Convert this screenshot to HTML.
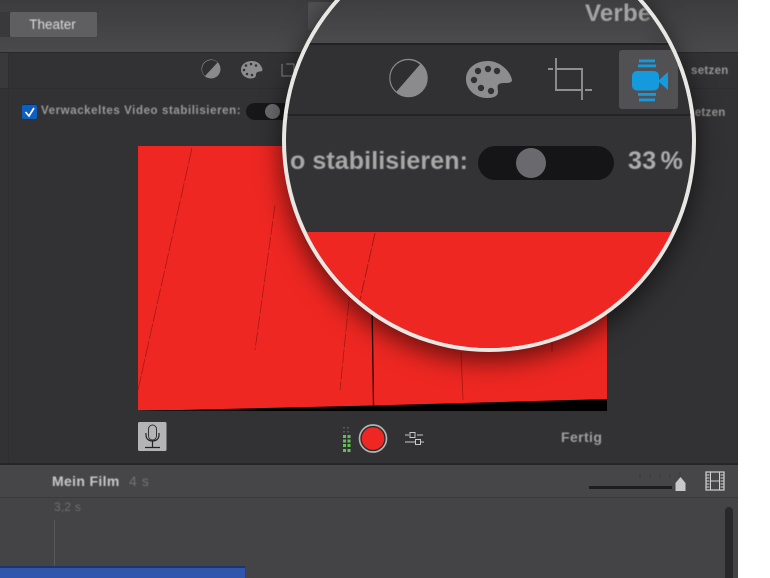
<!DOCTYPE html>
<html lang="de"><head><meta charset="utf-8"><title>iMovie</title>
<style>
html,body{margin:0;padding:0;background:#fff}
#p{position:relative;width:770px;height:578px;overflow:hidden;background:#fff;font-family:"Liberation Sans",sans-serif}
#p div,#p span{position:absolute;white-space:nowrap}
#p svg{position:absolute;left:0;top:0}
.b{filter:blur(.45px)}
</style></head><body>
<div id="p">
<div id="app" style="left:0;top:0;width:738px;height:578px;background:#323234;overflow:hidden">
  <div style="left:0;top:0;width:738px;height:52px;background:linear-gradient(#3c3c3e,#4a4a4c)"></div>
  <div style="left:0;top:52px;width:738px;height:1px;background:#29292b"></div>
  <div style="left:0;top:12px;width:10px;height:25px;background:#39393b"></div>
  <div style="left:10px;top:12px;width:87px;height:25px;background:#5f5f62;border-radius:2px"></div>
  <div class="b" style="left:9px;top:12px;width:87px;height:25px;line-height:25px;text-align:center;color:#dcdcdc;font-size:13.500px">Theater</div>
  <div style="left:308px;top:2px;width:30px;height:28px;background:#505053;border-radius:2px"></div>
  <div style="left:0;top:53px;width:8px;height:35px;background:#39393b"></div>
  <div style="left:8px;top:53px;width:1px;height:410px;background:#2e2e30"></div>
  <div style="left:0;top:88px;width:738px;height:1px;background:#2e2e30"></div>
  <div class="b" style="left:691px;top:65px;font-size:11.500px;font-weight:bold;letter-spacing:.3px;color:#979797">setzen</div>
  <div class="b" style="left:688px;top:107px;font-size:11.500px;font-weight:bold;letter-spacing:.3px;color:#979797">setzen</div>
  <div style="left:22px;top:104px;width:15px;height:15px;background:#0e5fc0;border-radius:2px;box-shadow:inset 0 1px 0 #0a2f66"></div>
  <svg width="738" height="578" viewBox="0 0 738 578">
    <path d="M25.500 112l3.500 4 5-8" fill="none" stroke="#fff" stroke-width="1.700"/>
    <circle cx="211" cy="69" r="9.500" fill="#8a8a8c"/>
    <path d="M205 76A9 9 0 0 1 217.500 62.500Z" fill="#2f2f31"/>
    <path d="M252 61c-6 0-11 3.500-11 8.500 0 5.500 5 9 10 9 4 0 5-2 5-4s2-3 4-3c2.500 0 3-1.500 2-3.500-1.500-4-5-7-10-7z" fill="#8d8d8f"/>
    <g fill="#333"><circle cx="246" cy="65.500" r="1.300"/><circle cx="251" cy="64" r="1.300"/><circle cx="256" cy="65.500" r="1.300"/><circle cx="244" cy="70" r="1.300"/><circle cx="247" cy="74" r="1.300"/><circle cx="252" cy="75" r="1.300"/></g>
    <path d="M282 64v12h12M286 64h8v12" fill="none" stroke="#888" stroke-width="1"/>
  </svg>
  <div class="b" style="left:41px;top:105px;font-size:11.500px;font-weight:bold;letter-spacing:.59px;color:#9a9a9a">Verwackeltes Video stabilisieren:</div>
  <div style="left:246px;top:103px;width:60px;height:17px;background:#17171a;border-radius:9px"></div>
  <div style="left:265px;top:104px;width:15px;height:15px;background:#6b6b6f;border-radius:50%"></div>

  <svg width="738" height="578" viewBox="0 0 738 578">
    <rect x="138" y="146" width="469" height="264" fill="#ee2722"/>
    <path d="M138 411L373 405.500L607 399V411Z" fill="#000"/>
    <g fill="none" stroke="#a31a16" stroke-width=".8">
      <path d="M192 148L138 390" stroke-dasharray="16 2"/>
      <path d="M275 205L255 350" stroke-dasharray="14 2"/>
      <path d="M352 270L340 390" stroke-dasharray="14 2"/>
      <path d="M461 352L463 400"/>
      <path d="M552 340V352"/>
    </g>
    <path d="M372 300L373.500 406" stroke="#2a0605" stroke-width="1.300" fill="none"/>
    <rect x="138" y="422" width="28.500" height="29" rx="1.500" fill="#b4b4b6"/>
    <rect x="148.500" y="425" width="8" height="15" rx="4" fill="none" stroke="#333" stroke-width="1"/>
    <path d="M146 433v2c0 4 3 6 6.500 6s6.500-2 6.500-6v-2M152.500 441v6M145 447.500h15" fill="none" stroke="#222" stroke-width="1.200"/>
    <g fill="#5fc24f">
      <rect x="343" y="435" width="3" height="3"/><rect x="347.500" y="435" width="3" height="3"/>
      <rect x="343" y="439.500" width="3" height="3"/><rect x="347.500" y="439.500" width="3" height="3"/>
      <rect x="343" y="444" width="3" height="3"/><rect x="347.500" y="444" width="3" height="3"/>
      <rect x="343" y="449" width="3" height="3"/><rect x="347.500" y="449" width="3" height="3"/>
    </g>
    <g fill="#5a5a5c"><rect x="343" y="427" width="2" height="1.500"/><rect x="347" y="427" width="2" height="1.500"/><rect x="343" y="431" width="2" height="1.500"/><rect x="347" y="431" width="2" height="1.500"/></g>
    <circle cx="373" cy="438.500" r="13.500" fill="#2b2b2d" stroke="#b4b4b4" stroke-width="1.700"/>
    <circle cx="373" cy="438.500" r="11.300" fill="#ee2722"/>
    <path d="M405 435h4M417 435h6M405 442h10M421 442h3" stroke="#c8c8c8" stroke-width="1.100" fill="none"/>
    <rect x="410" y="432.500" width="5" height="5" fill="none" stroke="#c8c8c8"/>
    <rect x="415.500" y="439.500" width="5" height="5" fill="none" stroke="#c8c8c8"/>
  </svg>
  <div class="b" style="left:561px;top:429px;font-size:14px;font-weight:bold;letter-spacing:.4px;color:#a0a0a0">Fertig</div>

  <div style="left:0;top:463px;width:738px;height:2px;background:#262628"></div>
  <div style="left:0;top:465px;width:738px;height:32px;background:#464648"></div>
  <div style="left:0;top:497px;width:738px;height:1px;background:#3a3a3c"></div>
  <div style="left:0;top:498px;width:738px;height:80px;background:#444446"></div>
  <div class="b" style="left:52px;top:473px;font-size:14px;font-weight:bold;letter-spacing:.35px;color:#c8c8c8">Mein Film</div>
  <div class="b" style="left:129px;top:473px;font-size:14px;letter-spacing:.6px;color:#737375">4 s</div>
  <div class="b" style="left:54px;top:500px;font-size:12px;letter-spacing:.2px;color:#6f6f71">3,2 s</div>
  <div style="left:54px;top:520px;width:1px;height:46px;background:#59595b"></div>
  <div style="left:0;top:566px;width:245px;height:2px;background:#1f3566"></div>
  <div style="left:0;top:568px;width:245px;height:10px;background:#2f55ac"></div>
  <div style="left:725px;top:507px;width:8px;height:71px;background:#29292b;border-radius:4px 4px 0 0"></div>
  <svg width="738" height="578" viewBox="0 0 738 578">
    <path d="M589 487.500H672" stroke="#1d1d1f" stroke-width="3" fill="none"/>
    <path d="M640 474v4M650 474v4M660 474v4M670 474v4M680 472v6" stroke="#3a3a3c" stroke-width="1" fill="none"/>
    <path d="M675.500 491v-8l5-6 5 6v8z" fill="#c8c8ca"/>
    <rect x="706" y="472" width="18" height="18" fill="none" stroke="#d0d0d0" stroke-width="1.200"/>
    <path d="M710.500 472v18M719.500 472v18M710.500 481h9" stroke="#d0d0d0" stroke-width="1" fill="none"/>
    <path d="M706.500 475h3M706.500 478h3M706.500 481h3M706.500 484h3M706.500 487h3M720.500 475h3M720.500 478h3M720.500 481h3M720.500 484h3M720.500 487h3" stroke="#d0d0d0" stroke-width="1" fill="none"/>
  </svg>
</div>

<div style="left:282px;top:-70px;width:406px;height:414px;border:4px solid #e9e7e4;border-radius:50%;overflow:hidden;box-shadow:0 8px 26px rgba(0,0,0,.6);background:#333335">
  <div style="left:-286px;top:66px;width:770px;height:578px">
    <div style="left:0;top:0;width:770px;height:43px;background:linear-gradient(#3e3e40,#4b4b4d)"></div>
    <div style="left:0;top:43px;width:770px;height:2px;background:#222224"></div>
    <div style="left:0;top:45px;width:770px;height:70px;background:#313133"></div>
    <div style="left:0;top:114px;width:770px;height:2px;background:#232325"></div>
    <div class="b" style="left:585px;top:0;font-size:24px;font-weight:bold;letter-spacing:.2px;color:#a4a4a4">Verbes</div>
    <div style="left:640px;top:0;width:30px;height:42px;background:linear-gradient(90deg,rgba(67,67,69,0),#434345 70%)"></div>
    <div style="left:619px;top:50px;width:59px;height:59px;background:#515154;border-radius:3px"></div>
    <svg width="770" height="578" viewBox="0 0 770 578">
      <circle cx="408.500" cy="78" r="18.500" fill="#8b8b8d" stroke="#8b8b8d" stroke-width="1.500"/>
      <path d="M396.500 91.500A17 17 0 0 1 420 64.500Z" fill="#2f2f31"/>
      <path d="M488 61c-13 0-22 8-22 18 0 11 10 19 21 19 7 0 11-2 11-6 0-3-1-5 0-7 1-2 5-2 8-2 4 0 6-1 6-3-2-10-13-19-24-19z" fill="#8d8d8f"/>
      <g fill="#323234">
        <circle cx="478" cy="71" r="3.200"/><circle cx="488" cy="69" r="3.200"/><circle cx="497" cy="71" r="3.200"/>
        <circle cx="474" cy="80" r="3.200"/><circle cx="481" cy="88" r="3.200"/><circle cx="491" cy="91" r="3.200"/>
      </g>
      <path d="M556 58V90H582M556 69H582V100M548 69H553M585 90H592" fill="none" stroke="#8f8f91" stroke-width="1.900"/>
      <g fill="#169ade">
        <rect x="632" y="71" width="27" height="19.500" rx="5"/>
        <path d="M658 81l10-9v18z"/>
        <rect x="639" y="59.500" width="16" height="2.800"/><rect x="638" y="64.500" width="18" height="2.800"/>
        <rect x="638" y="93" width="18" height="2.800"/><rect x="639" y="98.500" width="16" height="2.800"/>
      </g>
      <rect x="0" y="232" width="770" height="346" fill="#ee2722"/>
      <path d="M375 233L360 300" stroke="#a31a16" stroke-width="1" stroke-dasharray="14 2" fill="none"/>
    </svg>
    <div class="b" style="left:286px;top:147px;width:182px;text-align:right;overflow:hidden;font-size:25px;font-weight:bold;letter-spacing:.1px;color:#a8a8a8">o stabilisieren:</div>
    <div style="left:478px;top:146px;width:136px;height:34px;background:#151517;border-radius:17px"></div>
    <div style="left:516px;top:148px;width:30px;height:30px;background:#6a6a6e;border-radius:50%"></div>
    <div class="b" style="left:628px;top:147px;font-size:25px;font-weight:bold;word-spacing:-3px;letter-spacing:.3px;color:#adadad">33 %</div>
  </div>
</div>
</div>
</body></html>
